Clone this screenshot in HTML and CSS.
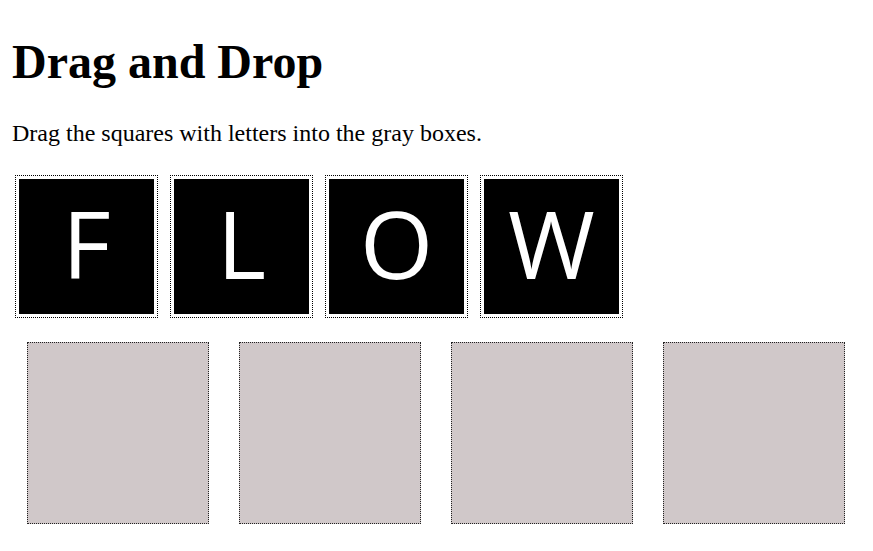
FILE: index.html
```html
<!DOCTYPE html>
<html>
<head>
<meta charset="utf-8">
<link rel="stylesheet" href="styles.css">
</head>
<body>
<h1 class="title">Drag and Drop</h1>
<p class="hint">Drag the squares with letters into the gray boxes.</p>
<div class="tiles">
  <div class="tile"><div class="letter">F</div></div>
  <div class="tile"><div class="letter">L</div></div>
  <div class="tile"><div class="letter">O</div></div>
  <div class="tile"><div class="letter">W</div></div>
</div>
<div class="targets">
  <div class="target"></div>
  <div class="target"></div>
  <div class="target"></div>
  <div class="target"></div>
</div>
</body>
</html>
```
FILE: styles.css
```css
body {
  margin: 0;
  padding: 0 12px;
  font-family: "Liberation Serif", "Times New Roman", serif;
  color: #000;
  background: #fff;
}
.title {
  font-size: 48px;
  font-weight: bold;
  margin: 32px 0 0;
  line-height: 60px;
}
.hint {
  font-size: 24px;
  margin: 27px 0 0;
  line-height: 28px;
}
.tiles {
  display: flex;
  gap: 12px;
  margin-top: 28px;
  padding-left: 3px;
}
.tile {
  border: 1px dotted #000;
  padding: 3px;
}
.letter {
  box-sizing: border-box;
  width: 135px;
  height: 135px;
  padding-bottom: 7px;
  background: #000;
  color: #fff;
  font-family: "Open Sans", sans-serif;
  font-size: 94px;
  display: flex;
  align-items: center;
  justify-content: center;
  line-height: 1;
}
.targets {
  display: flex;
  gap: 30px;
  margin-top: 24px;
  padding-left: 15px;
}
.target {
  width: 180px;
  height: 180px;
  border: 1px dotted #222;
  background: #d0c8c9;
}
```
